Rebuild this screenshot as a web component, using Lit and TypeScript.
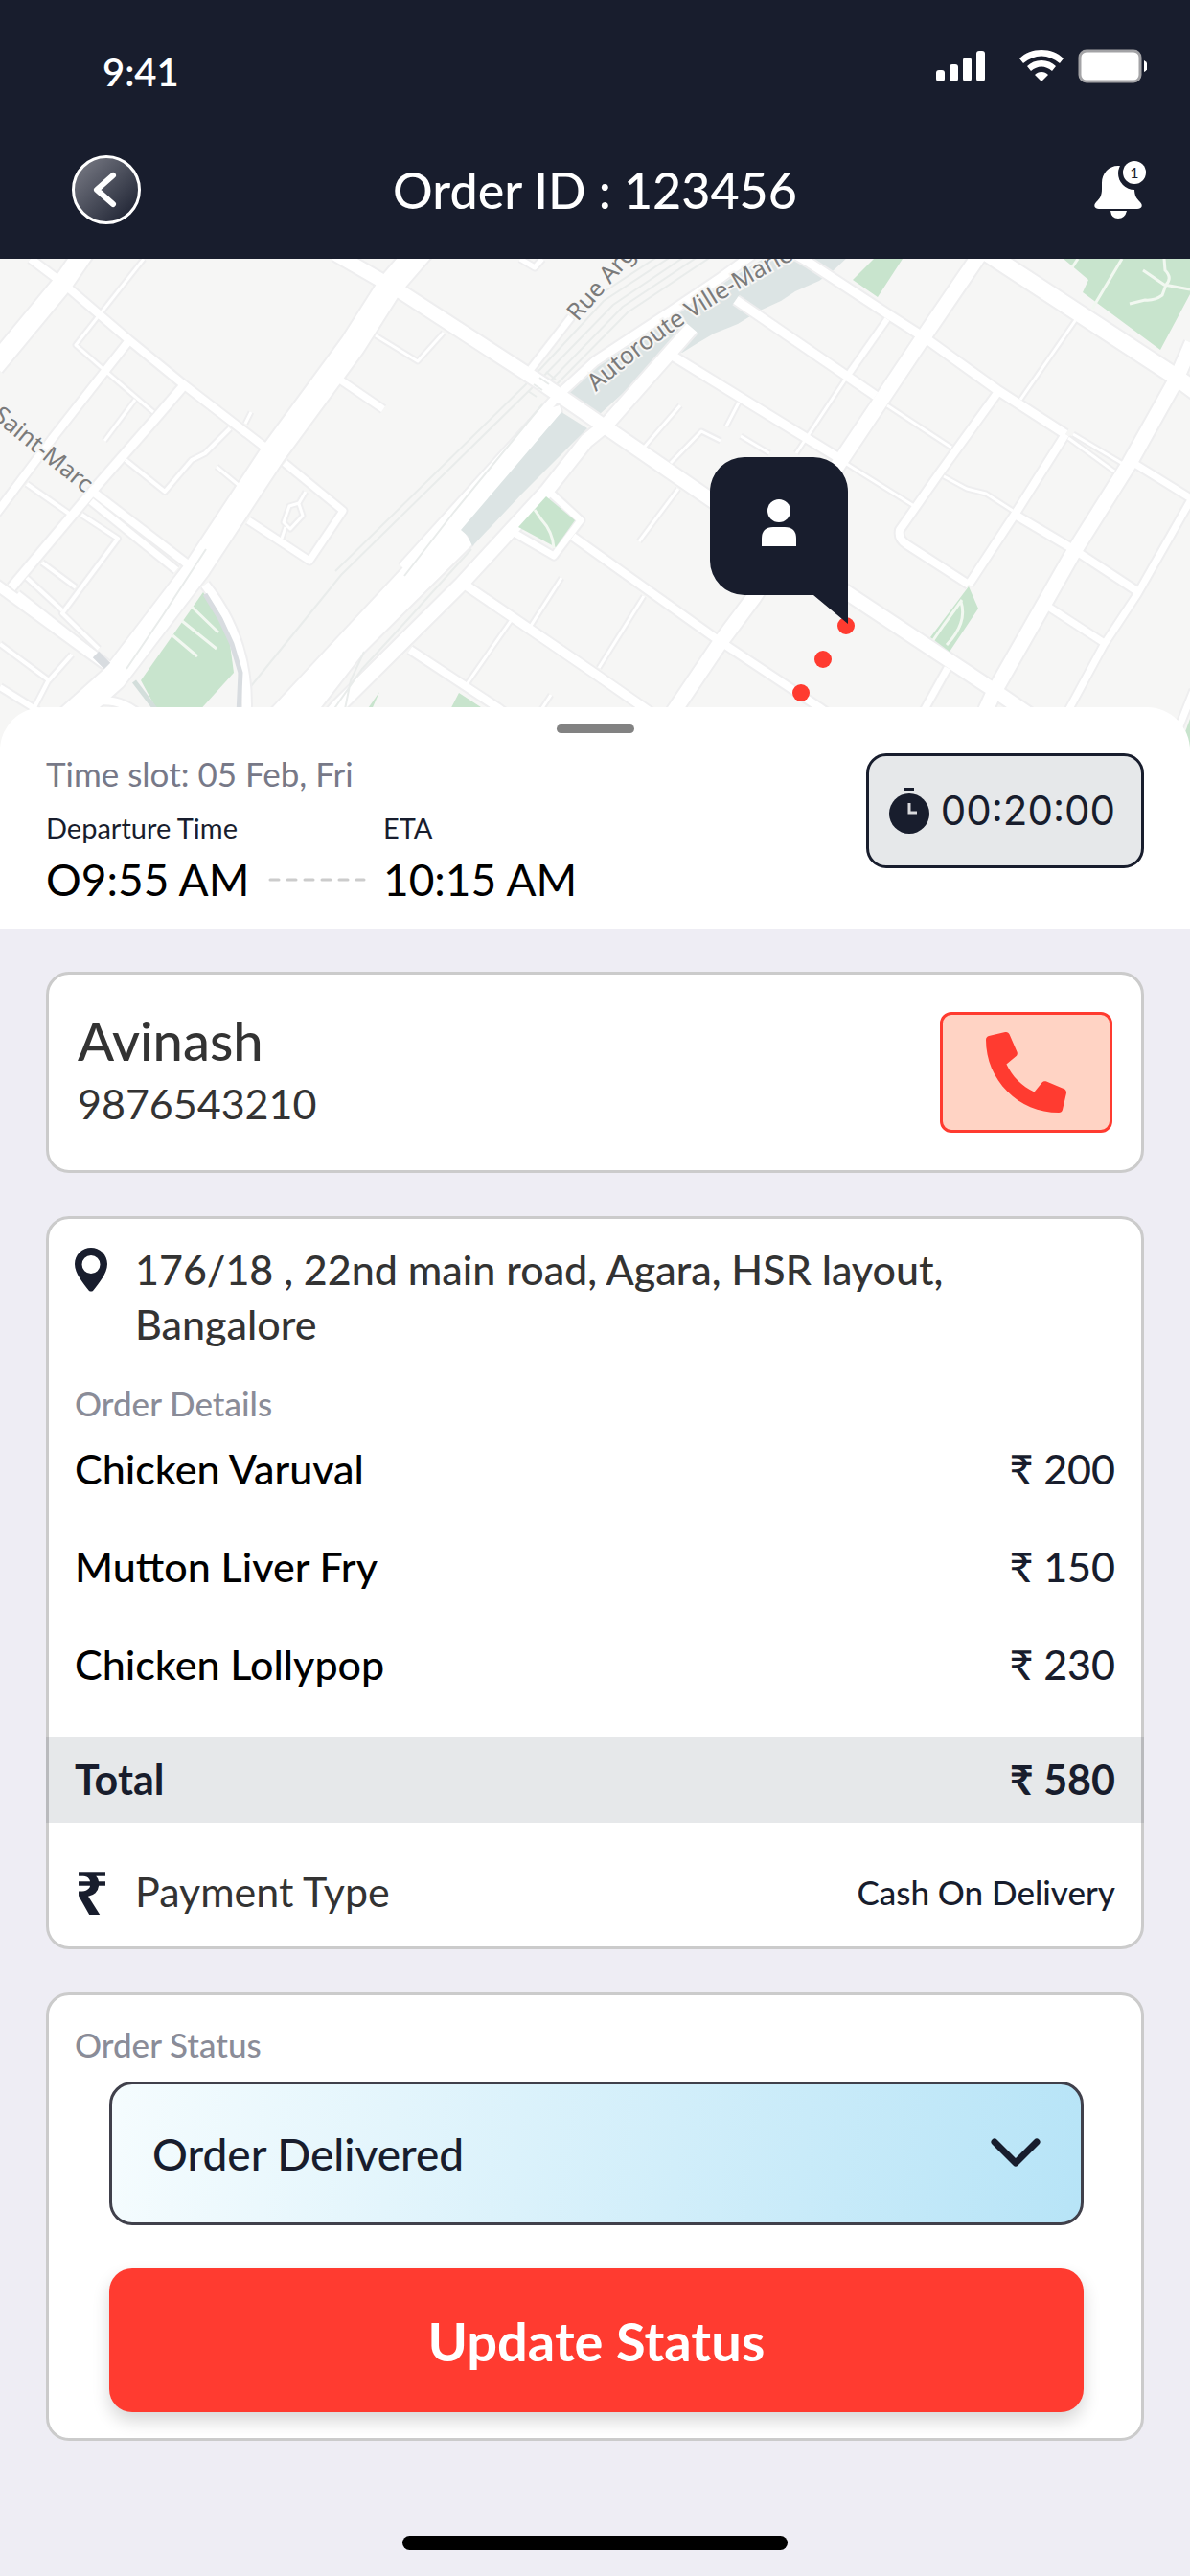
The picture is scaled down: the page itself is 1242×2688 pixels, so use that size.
import { LitElement, html, svg, css } from "lit";
import { customElement, property, state } from "lit/decorators.js";

interface Road {
  d: string;
  w: number;
}

const ROADS: Road[] = [
  // footpaths and lanes
  { w: 3, d: "M150 0 101 62 79 90 111 118 160 160" },
  { w: 3, d: "M141 147 109 190" },
  { w: 4, d: "M131 210 172 243 200 210 214 203 240 177" },
  { w: 3, d: "M226 217 250 237M256 172 262 160" },
  { w: 4, d: "M28 235 75 268 M85 267 123 292 65 370 103 407" },
  { w: 4, d: "M28 333 65 367M44 317 79 343" },
  { w: 4, d: "M0 402 51 440 75 413M50 441 34 472" },
  { w: 3, d: "M392 80 436 107 463 77" },
  { w: 3, d: "M319 243 312 255 302 258 296 275 303 282 316 268 312 256M298 280 294 292" },
  { w: 5, d: "M543 0 558 9 566 0" },
  { w: 3, d: "M586 333 554 383M533 378 485 447M575 455 562 475" },
  { w: 3, d: "M1124 62 1065 147M886 120 831 203" },
  { w: 3, d: "M1115 187 1163 222M1120 183 1172 214" },
  { w: 3, d: "M926 153 993 197M882 213 954 258" },
  { w: 3, d: "M985 227 1009 240 1029 245 1057 263" },
  { w: 3, d: "M710 153 672 197M700 213 732 180 752 190M771 150 758 175M773 185 803 203" },
  { w: 3, d: "M708 240 667 295M672 352 625 427" },
  // streets
  { w: 6, d: "M0 447 40 472" },
  { w: 8, d: "M32 0 65 25 135 85 190 130 277 197" },
  { w: 8, d: "M135 85 109 118 55 187 -4 266" },
  { w: 9, d: "M192 132 162 167 101 237 12 343" },
  { w: 8, d: "M93 240 200 322" },
  { w: 7, d: "M95 253 184 325" },
  { w: 10, d: "M-4 340 118 429" },
  { w: 7, d: "M18 350 98 413" },
  { w: 7, d: "M297 213 358 263 323 315 259 273" },
  { w: 7, d: "M356 127 400 157" },
  { w: 7, d: "M554 115 596 61" },
  { w: 7, d: "M570 240 606 273 578 310 535 285" },
  { w: 8, d: "M598 290 748 397 855 468 900 500" },
  { w: 9, d: "M485 340 621 433 700 488" },
  { w: 8, d: "M428 408 519 468 560 498" },
  { w: 9, d: "M824 -8 843 3 930 60 966 83 1041 137 1112 183" },
  { w: 9, d: "M768 43 914 143" },
  { w: 9, d: "M700 100 874 207" },
  { w: 6, d: "M926 63 886 120" },
  { w: 8, d: "M1041 140 981 223 939 283Q937 292 946 298L1011 340" },
  { w: 8, d: "M1112 183 1059 267 1011 340" },
  { w: 8, d: "M1061 268 1120 303 1187 347" },
  { w: 7, d: "M1183 213 1246 252" },
  { w: 7, d: "M1246 246 1187 350 1152 403 1106 488" },
  { w: 7, d: "M1094 363 1154 402" },
  { w: 7, d: "M989 427 955 488" },
  { w: 7, d: "M1246 450 1226 500" },
  { w: 9, d: "M214 340Q262 400 257 480" },
  { w: 8, d: "M80 468Q120 450 150 480" },
  // main roads
  { w: 14, d: "M350 -5 416 33 570 133 740 250 886 350 1037 450 1110 500" },
  { w: 15, d: "M1025 -8 965 80 878 210 787 353 752 400 690 492" },
  { w: 17, d: "M1030 -6 1227 123 1250 140" },
  { w: 15, d: "M1244 88 1227 127 1179 213 1120 307 1037 453 1020 490" },
  { w: 20, d: "M90 -10 66 25 -6 112" },
  { w: 26, d: "M440 -10 408 27 368 90 285 203 206 323 119 437 60 490" },
  { w: 14, d: "M325 500 352 468 481 340 570 243 612 190 633 173 700 97 722 72" },
  { w: 9, d: "M420 322 582 143 621 107 700 55 752 20 785 -4" },
];

const ROUTE_DOTS = [
  [883, 383],
  [859, 418],
  [836, 453],
];

@customElement("city-map")
class CityMap extends LitElement {
  static styles = css`
    :host {
      display: block;
      height: 513px;
      background: #f6f6f5;
      overflow: hidden;
    }
    .map {
      display: block;
      width: 100%;
      height: 100%;
    }
    .casing {
      fill: none;
      stroke: #eeeeef;
      stroke-linejoin: round;
    }
    .road {
      fill: none;
      stroke: #ffffff;
      stroke-linejoin: round;
    }
    .highway {
      fill: #ffffff;
    }
    .park {
      fill: #c8e4cd;
    }
    .path {
      fill: none;
      stroke: #f2f8f1;
      stroke-width: 3;
    }
    .canal {
      fill: #dce4e4;
    }
    .rail {
      fill: none;
      stroke: #e9eceb;
      stroke-width: 2;
    }
    .label {
      font-family: "Noto Sans", "Open Sans", sans-serif;
      font-size: 25px;
      fill: #7b7b7b;
      stroke: #f6f6f5;
      stroke-width: 4;
      paint-order: stroke;
    }
    .pin {
      fill: #181d2d;
    }
    .person {
      fill: #ffffff;
    }
    .dot {
      fill: #ff3b30;
    }
  `;

  render() {
    return html`
      <svg class="map" viewBox="0 0 1242 513" preserveAspectRatio="xMidYMin slice" role="img" aria-label="Delivery route map">
        <defs>
          <path id="autoroute" d="M622 139Q712 58 850 -10"></path>
        </defs>
        <path class="rail" d="M720 -6 640 48 560 130 356 330 262 446M706 -6 630 44 552 128 350 326M734 -6 650 50 568 134M692 -6 616 44 545 124M748 -6 655 56 574 138"></path>
        <path class="canal" d="M592 137 621 112 700 60 752 27 800 -2 885 -2 870 12 855 23 830 34 815 44 791 55 770 68 745 78 728 88 712 98 700 95 625 163 614 158Z"></path>
        ${ROADS.map((r) => svg`<path class="casing" stroke-width=${r.w + 4} d=${r.d}></path>`)}
        <path class="casing" stroke-width="4" d="M240 513 285 468 420 323 570 157 584 153 586 160 483 283 493 298 380 410 300 513"></path>
        <path class="highway" d="M240 513 285 468 420 323 570 157 584 153 586 160 483 283 493 298 380 410 300 513Z"></path>
        ${ROADS.map((r) => svg`<path class="road" stroke-width=${r.w} d=${r.d}></path>`)}
        <path class="canal" d="M481 283 586 160 613 177 545 245 493 300 488 289Z"></path>
        <path class="rail" d="M215 303 170 372 132 428M422 331 474 264 566 152M492 303 425 377 378 428 345 475M380 410 366 440 360 470"></path>
        <path class="rail" d="M557 131 566 137M563 124 573 131M570 118 580 126M551 138 560 144"></path>
        <path class="park" d="M212 348 147 440 166 475 205 475 244 432 240 402 226 370Z"></path>
        <path d="M214 350 230 376 242 402 251 432 249 475" fill="none" stroke="#d8dce0" stroke-width="5"></path>
        <path d="M140 441 166 475" fill="none" stroke="#d3dedb" stroke-width="5"></path>
        <path d="M100 413 112 425" fill="none" stroke="#d8dce0" stroke-width="9"></path>
        <path class="path" d="M200 363 228 390M190 378 226 407M180 393 206 415"></path>
        <path class="park" d="M570 248 600 273 580 301 541 280Z"></path>
        <path class="path" d="M558 262 565 272Q577 285 578 302"></path>
        <path class="park" d="M479 453 505 470 500 480 465 480ZM396 452 380 475 386 475Z"></path>
        <path class="park" d="M1110 0 1136 22 1130 35 1211 95 1242 37 1242 0ZM912 0 942 0 916 40 890 22ZM1011 342 1021 365 991 410 971 395Z"></path>
        <path class="park" d="M1242 480 1230 513 1242 513Z"></path>
        <path class="path" d="M1171 0 1140 52M1215 0 1216 12Q1224 20 1217 27L1213 38Q1205 44 1195 43L1179 47M1193 12 1215 27 1242 32M1119 9 1125 0"></path>
        <path class="path" d="M1004 356 985 382 974 398M1003 358Q1010 380 988 403"></path>
        <text class="label" transform="translate(-9 166) rotate(39)">Saint-Marc</text>
        <text class="label" transform="translate(603 66) rotate(-49)">Rue Argyle</text>
        <text class="label"><textPath href="#autoroute">Autoroute Ville-Marie</textPath></text>
        ${ROUTE_DOTS.map(([x, y]) => svg`<circle class="dot" cx=${x} cy=${y} r="9"></circle>`)}
        <path class="pin" d="M777 207H849A36 36 0 0 1 885 243V381L849 351H777A36 36 0 0 1 741 315V243A36 36 0 0 1 777 207Z"></path>
        <circle class="person" cx="813" cy="263" r="12"></circle>
        <path class="person" d="M795 300V292Q795 280 807 280H819Q831 280 831 292V300Z"></path>
      </svg>
    `;
  }
}

interface OrderItem {
  name: string;
  price: number;
}

@customElement("order-items")
class OrderItems extends LitElement {
  @property({ attribute: false }) items: OrderItem[] = [];

  static styles = css`
    :host {
      display: block;
      margin: 0 -3px;
    }
    .items {
      width: 100%;
      border-spacing: 0;
      font-size: 43px;
      line-height: 54px;
      color: #181d2d;
    }
    .name,
    .price {
      padding: 0 30px 48px;
      font-weight: 500;
    }
    .name {
      text-align: left;
      color: #000000;
    }
    .price {
      text-align: right;
    }
    .total {
      padding: 18px 27px;
      background: #e6e8ea;
      font-weight: 700;
    }
    .total-name {
      text-align: left;
      border-left: 3px solid #b9babd;
    }
    .total-price {
      text-align: right;
      border-right: 3px solid #b9babd;
    }
  `;

  render() {
    const total = this.items.reduce((sum, i) => sum + i.price, 0);
    return html`
      <table class="items" aria-label="Order items">
        <tbody>
          ${this.items.map(
            (i) => html`<tr><th class="name" scope="row">${i.name}</th><td class="price">₹ ${i.price}</td></tr>`,
          )}
        </tbody>
        <tfoot>
          <tr><th class="total total-name" scope="row">Total</th><td class="total total-price">₹ ${total}</td></tr>
        </tfoot>
      </table>
    `;
  }
}

@customElement("app-root")
class AppRoot extends LitElement {
  @state() private status = "Order Delivered";

  private items: OrderItem[] = [
    { name: "Chicken Varuval", price: 200 },
    { name: "Mutton Liver Fry", price: 150 },
    { name: "Chicken Lollypop", price: 230 },
  ];

  static styles = css`
    :host {
      display: flex;
      flex-direction: column;
      min-height: 100vh;
      background: #eeedf4;
      color: #181d2d;
      font-family: Lato, "Open Sans", "Noto Sans", sans-serif;
    }
    *,
    *::before {
      box-sizing: border-box;
    }
    button,
    select {
      font: inherit;
      cursor: pointer;
    }
    svg {
      display: block;
    }
    .header {
      background: #181d2d;
      color: #ffffff;
      padding: 45px 45px 36px;
      display: flex;
      flex-direction: column;
      gap: 57px;
    }
    .status {
      display: flex;
      justify-content: space-between;
      align-items: flex-start;
      padding-left: 62px;
    }
    .clock {
      font-size: 40px;
      line-height: 60px;
      font-weight: 600;
    }
    .nav {
      display: grid;
      grid-template-columns: 1fr auto 1fr;
      align-items: center;
    }
    .back {
      width: 72px;
      height: 72px;
      margin-left: 30px;
      padding: 0;
      display: grid;
      place-items: center;
      border: 3px solid #ffffff;
      border-radius: 50%;
      background: linear-gradient(135deg, #7c7e88, #181d2d);
    }
    .title {
      margin: 0;
      font-size: 52px;
      line-height: 72px;
      font-weight: 500;
    }
    .bell {
      justify-self: end;
      padding: 0;
      border: 0;
      background: none;
    }
    .sheet {
      position: relative;
      margin-top: -45px;
      padding: 18px 48px 21px;
      border-radius: 45px 45px 0 0;
      background: #ffffff;
    }
    .handle {
      width: 81px;
      height: 9px;
      margin: 0 auto 21px;
      border-radius: 5px;
      background: #828282;
    }
    .slot-row {
      display: flex;
      justify-content: space-between;
      align-items: flex-start;
    }
    .slot {
      font-size: 35px;
      line-height: 42px;
      color: #777988;
      margin-bottom: 18px;
    }
    .times {
      display: grid;
      grid-template-columns: 214px 102px auto;
      column-gap: 18px;
      row-gap: 6px;
      align-items: center;
    }
    .time-label {
      font-size: 29px;
      line-height: 36px;
    }
    .time {
      font-size: 46px;
      line-height: 60px;
      color: #000000;
      white-space: nowrap;
    }
    .timer {
      display: flex;
      align-items: center;
      gap: 12px;
      height: 120px;
      padding: 0 27px 0 21px;
      border: 3px solid #181d2d;
      border-radius: 21px;
      background: #e6e8ea;
      font-family: Inter, Lato, sans-serif;
      font-size: 42px;
      line-height: 54px;
    }
    .cards {
      display: flex;
      flex-direction: column;
      gap: 45px;
      padding: 45px 48px;
    }
    .card {
      border: 3px solid #cbcbcb;
      border-radius: 24px;
      background: #ffffff;
    }
    .customer {
      display: flex;
      justify-content: space-between;
      align-items: center;
      padding: 36px 30px;
      color: #333333;
      line-height: 66px;
    }
    .name {
      margin: 0;
      font-size: 56px;
      font-weight: 500;
    }
    .phone {
      margin: 0;
      font-size: 43px;
    }
    .call {
      display: grid;
      place-items: center;
      width: 180px;
      height: 126px;
      border: 3px solid #ff3b30;
      border-radius: 12px;
      background: #ffd3c4;
    }
    .address {
      display: grid;
      grid-template-columns: 36px 1fr;
      column-gap: 27px;
      padding: 24px 27px 0;
      font-size: 43px;
      line-height: 57px;
      font-weight: 500;
      font-style: normal;
      color: #333333;
    }
    .address svg {
      margin-top: 6px;
    }
    .address-text {
      max-width: 930px;
    }
    .caption {
      display: block;
      margin: 0;
      font-size: 35px;
      line-height: 48px;
      font-weight: 500;
      color: #8a8c98;
    }
    .details {
      padding: 30px 27px 18px;
    }
    .payment {
      display: grid;
      grid-template-columns: 36px 1fr auto;
      column-gap: 27px;
      align-items: center;
      padding: 45px 27px 30px;
      line-height: 54px;
    }
    .rupee {
      font-family: "Noto Sans", sans-serif;
      font-size: 62px;
      font-weight: 700;
    }
    .payment-label {
      font-size: 43px;
      color: #333333;
    }
    .payment-type {
      font-size: 35px;
      font-weight: 500;
    }
    .update {
      padding: 27px;
    }
    .controls {
      display: grid;
      gap: 45px;
      margin: 15px 33px 0 36px;
    }
    .select-wrap {
      position: relative;
    }
    .select {
      display: block;
      width: 100%;
      height: 150px;
      padding: 0 120px 0 42px;
      appearance: none;
      border: 3px solid #40404b;
      border-radius: 24px;
      background: linear-gradient(97deg, #f5fcfe, #b7e4f7);
      color: #181d2d;
      font-size: 46px;
      font-weight: 500;
    }
    .chevron {
      position: absolute;
      right: 42px;
      top: 57px;
      pointer-events: none;
    }
    .submit {
      height: 150px;
      border: 0;
      border-radius: 24px;
      background: #ff3b30;
      color: #ffffff;
      font-size: 56px;
      font-weight: 700;
      box-shadow: 0 9px 18px rgba(0, 0, 0, 0.16);
    }
    .home {
      width: 402px;
      height: 15px;
      margin: auto auto 27px;
      border-radius: 8px;
      background: #000000;
    }
  `;

  private onStatus(e: Event) {
    this.status = (e.target as HTMLSelectElement).value;
  }

  render() {
    return html`
      <header class="header">
        <div class="status">
          <span class="clock">9:41</span>
          <svg width="222" height="48" viewBox="975 45 222 48" fill="#fff" aria-hidden="true">
            <rect x="977" y="73" width="9" height="12" rx="3"></rect>
            <rect x="991" y="67" width="9" height="18" rx="3"></rect>
            <rect x="1005" y="60" width="9" height="25" rx="3"></rect>
            <rect x="1019" y="53" width="9" height="32" rx="3"></rect>
            <path d="M1087 52C1096 52 1104 55 1110 61L1106 66C1094 56 1080 56 1068 66L1064 61C1070 55 1078 52 1087 52Z"></path>
            <path d="M1087 63C1093 63 1098 65 1102 69L1098 74C1091 68 1083 68 1076 74L1072 69C1076 65 1081 63 1087 63Z"></path>
            <path d="M1087 75C1090 75 1092 76 1094 78L1087 85 1080 78C1082 76 1084 75 1087 75Z"></path>
            <rect x="1127" y="53" width="63" height="32" rx="7" stroke="#a3a3a6" stroke-width="3"></rect>
            <path d="M1194 63Q1198 65 1198 69T1194 75Z"></path>
          </svg>
        </div>
        <div class="nav">
          <button class="back" aria-label="Back">
            <svg width="60" height="60" viewBox="0 0 60 60" fill="none" stroke="#fff" stroke-width="6" stroke-linecap="round" stroke-linejoin="round">
              <path d="M37 15 20 30 37 45"></path>
            </svg>
          </button>
          <h1 class="title">Order ID : 123456</h1>
          <button class="bell" aria-label="Notifications">
            <svg width="60" height="60" viewBox="0 0 60 60">
              <path fill="#fff" d="M30 5C20 5 13 13 13 23V29C13 36 11 39 7 43C4 46 5 50 10 50H50C55 50 56 46 53 43C49 39 47 36 47 29V23C47 13 40 5 30 5ZM22 52H39Q37 60 30 60T22 52Z"></path>
              <circle cx="47" cy="13" r="17" fill="#181d2d"></circle>
              <circle cx="47" cy="12" r="12" fill="#fff"></circle>
              <text x="47" y="18" text-anchor="middle" font-size="16" fill="#181d2d">1</text>
            </svg>
          </button>
        </div>
      </header>

      <city-map></city-map>

      <section class="sheet">
        <div class="handle"></div>
        <div class="slot-row">
          <div>
            <div class="slot">Time slot: 05 Feb, Fri</div>
            <div class="times">
              <span class="time-label">Departure Time</span><span></span><span class="time-label">ETA</span>
              <span class="time">O9:55 AM</span>
              <svg width="102" height="6" viewBox="0 0 102 6" aria-hidden="true">
                <path d="M2 3H100" stroke="#ccc" stroke-width="3" stroke-dasharray="9 9" stroke-linecap="round"></path>
              </svg>
              <span class="time">10:15 AM</span>
            </div>
          </div>
          <div class="timer">
            <svg width="42" height="48" viewBox="0 0 42 48" aria-hidden="true">
              <path d="M16 0H26V3H16Z" fill="#181d2d"></path>
              <circle cx="21" cy="27" r="21" fill="#181d2d"></circle>
              <path d="M21 16V26H29" fill="none" stroke="#d9dadd" stroke-width="3"></path>
            </svg>
            <span>00:20:00</span>
          </div>
        </div>
      </section>

      <main class="cards">
        <section class="card customer">
          <div>
            <h2 class="name">Avinash</h2>
            <p class="phone">9876543210</p>
          </div>
          <button class="call" aria-label="Call Avinash">
            <svg width="84" height="84" viewBox="0 0 512 512">
              <path fill="#ff3b30" transform="translate(512 0) scale(-1 1)" d="M493.4 24.6l-104-24c-11.3-2.6-22.9 3.3-27.5 13.9l-48 112c-4.2 9.8-1.4 21.3 6.9 28l60.6 49.6c-36 76.7-98.9 140.5-177.2 177.2l-49.6-60.6c-6.8-8.3-18.2-11.1-28-6.9l-112 48C3.9 366.5-2 378.1.6 389.4l24 104C27.1 504.2 36.7 512 48 512c256.1 0 464-207.5 464-464 0-11.2-7.7-20.9-18.6-23.4z"></path>
            </svg>
          </button>
        </section>

        <section class="card">
          <address class="address">
            <svg width="34" height="46" viewBox="0 0 34 46" aria-hidden="true">
              <path fill="#181d2d" fill-rule="evenodd" d="M17 0C26 0 34 7 34 17C34 27 25 37 19 45Q17 46 15 45C9 37 0 27 0 17C0 7 8 0 17 0ZM17 8A9.500 9.500 0 1 0 17 27A9.500 9.500 0 1 0 17 8Z"></path>
            </svg>
            <span class="address-text">176/18 , 22nd main road, Agara, HSR layout, Bangalore</span>
          </address>
          <div class="details"><h3 class="caption">Order Details</h3></div>
          <order-items .items=${this.items}></order-items>
          <div class="payment">
            <span class="rupee" aria-hidden="true">₹</span>
            <span class="payment-label">Payment Type</span>
            <span class="payment-type">Cash On Delivery</span>
          </div>
        </section>

        <section class="card update">
          <label class="caption" for="status">Order Status</label>
          <div class="controls">
            <div class="select-wrap">
              <select class="select" id="status" .value=${this.status} @change=${this.onStatus}>
                <option>Order Delivered</option>
              </select>
              <svg class="chevron" width="57" height="36" viewBox="0 0 57 36" fill="none" stroke="#181d2d" stroke-width="7" stroke-linecap="round" stroke-linejoin="round" aria-hidden="true">
                <path d="M6 6 28 28 50 6"></path>
              </svg>
            </div>
            <button class="submit">Update Status</button>
          </div>
        </section>
      </main>

      <div class="home"></div>
    `;
  }
}
